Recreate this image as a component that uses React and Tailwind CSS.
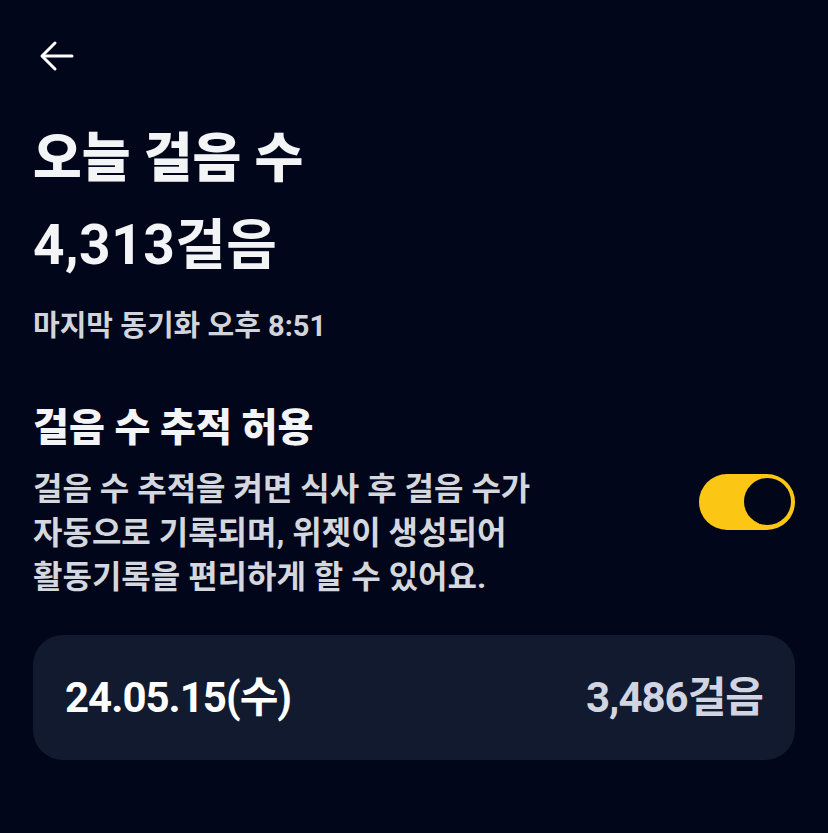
import { useState } from "react";

const ArrowLeft = () => (
  <svg width="36" height="32" viewBox="0 0 36 32" fill="none" stroke="currentColor" strokeWidth="3" strokeLinecap="round" strokeLinejoin="round">
    <path d="M33 16H4" />
    <path d="M16 3L3 16l13 13" />
  </svg>
);

const Toggle = ({ on, onChange }) => (
  <button
    onClick={() => onChange(!on)}
    className={`flex shrink-0 items-center w-[96px] h-[56px] rounded-full p-[4px] ${on ? "bg-[#fcc714] justify-end" : "bg-[#374151] justify-start"}`}
  >
    <span className="block w-[47px] h-[47px] rounded-full bg-[#020619]" />
  </button>
);

const App = () => {
  const [tracking, setTracking] = useState(true);

  return (
    <div
      className="min-h-screen w-full bg-[#02061a] text-[#f3f4f6] px-[33px] pt-[40px]"
      style={{ fontFamily: 'Roboto, "Noto Sans CJK KR", sans-serif' }}
    >
      <button className="text-white ml-[6px] block">
        <ArrowLeft />
      </button>

      <h1 className="mt-[55px] text-[53px] font-extrabold leading-[64px]">오늘 걸음 수</h1>
      <p className="mt-[22px] text-[55px] font-bold leading-[64px] tracking-[0.5px]">4,313걸음</p>
      <p className="mt-[31px] text-[29px] font-bold leading-[36px] text-[#d1d5db]">마지막 동기화 오후 8:51</p>

      <div className="mt-[60px] flex items-center justify-between">
        <div>
          <h2 className="text-[39px] font-extrabold leading-[48px]">걸음 수 추적 허용</h2>
          <p className="mt-[15px] text-[32px] font-bold leading-[44px] text-[#d4d7de]">
            걸음 수 추적을 켜면 식사 후 걸음 수가
            <br />
            자동으로 기록되며, 위젯이 생성되어
            <br />
            활동기록을 편리하게 할 수 있어요.
          </p>
        </div>
        <Toggle on={tracking} onChange={setTracking} />
      </div>

      <div className="mt-[36px] flex items-center justify-between rounded-[30px] bg-[#111a2e] h-[125px] px-[32px]">
        <span className="text-[42px] font-bold text-white tracking-[-1px]">24.05.15(수)</span>
        <span className="text-[42px] font-bold text-[#d1d5e1] tracking-[-1px]">3,486걸음</span>
      </div>
    </div>
  );
};

export default App;
